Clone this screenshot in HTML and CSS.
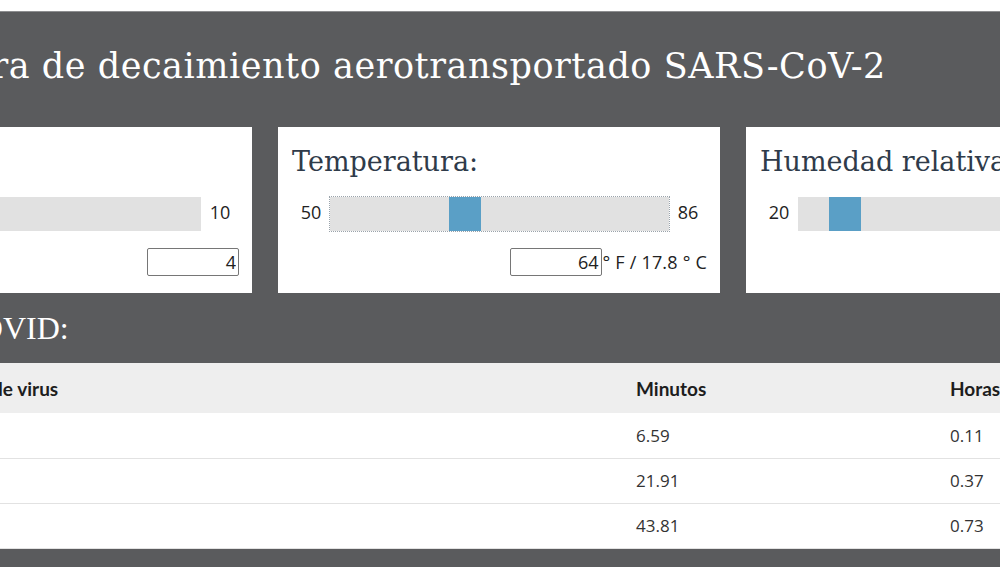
FILE: index.html
```html
<!DOCTYPE html>
<html lang="es">
<head>
    <meta charset="UTF-8">
    <title>Calculadora de decaimiento aerotransportado SARS-CoV-2</title>
    <link rel="stylesheet" href="styles.css">
</head>
<body>

    <div class="page">
        <div class="panel">

            <h1 class="title">Calculadora de decaimiento aerotransportado SARS-CoV-2</h1>

            <div class="inputs">
                <div class="card">
                    <h2 class="card-label">Índice UV:</h2>
                    <div class="slider-row">
                        <span class="range-end">1</span>
                        <div class="track"><span class="thumb" style="--pos: 0.333"></span></div>
                        <span class="range-end">10</span>
                    </div>
                    <div class="value-row">
                        <input class="value-box" type="text" value="4">
                    </div>
                </div>

                <div class="card">
                    <h2 class="card-label">Temperatura:</h2>
                    <div class="slider-row">
                        <span class="range-end">50</span>
                        <div class="track track-focus"><span class="thumb" style="--pos: 0.389"></span></div>
                        <span class="range-end">86</span>
                    </div>
                    <div class="value-row">
                        <input class="value-box" type="text" value="64">
                        <span class="unit">° F / 17.8 ° C</span>
                    </div>
                </div>

                <div class="card">
                    <h2 class="card-label">Humedad relativa:</h2>
                    <div class="slider-row">
                        <span class="range-end">20</span>
                        <div class="track"><span class="thumb" style="--pos: 0.1"></span></div>
                        <span class="range-end">70</span>
                    </div>
                    <div class="value-row">
                        <input class="value-box" type="text" value="25">
                        <span class="unit">%</span>
                    </div>
                </div>
            </div>

            <h2 class="section-title">Resultados COVID:</h2>

            <table class="results">
                <colgroup>
                    <col class="col-label">
                    <col class="col-min">
                    <col class="col-hour">
                </colgroup>
                <thead>
                    <tr>
                        <th>Decaimiento de virus</th>
                        <th>Minutos</th>
                        <th>Horas</th>
                    </tr>
                </thead>
                <tbody>
                    <tr><td>50%</td><td>6.59</td><td>0.11</td></tr>
                    <tr><td>90%</td><td>21.91</td><td>0.37</td></tr>
                    <tr><td>99%</td><td>43.81</td><td>0.73</td></tr>
                </tbody>
            </table>

        </div>
    </div>

</body>
</html>
```

FILE: styles.css
```css
* {
    margin: 0;
    padding: 0;
    box-sizing: border-box;
}
body {
    font: 18px "Open Sans", sans-serif;
    color: #333;
    background: #fff;
    overflow: hidden;
}

/***************************************************/

.page {
    width: 1430px;
    margin-left: -216px;
    padding-top: 11px;
}
.panel {
    background: #5a5b5d;
    border-top: 1px solid #8d8e90;
    padding: 0 26px 40px 26px;
}

.title {
    font: normal 35px/42px "DejaVu Serif", serif;
    letter-spacing: 0.55px;
    color: #fff;
    padding: 33px 0 40px 0;
}

/*********************/

.inputs {
    display: grid;
    grid-template-columns: repeat(3, 442px);
    gap: 26px;
}
.card {
    background: #fff;
    height: 166px;
    padding: 18px 13px 17px 14px;
}
.card-label {
    font: normal 27px/34px "DejaVu Serif", serif;
    color: #2f3b4a;
}
.slider-row {
    display: flex;
    align-items: center;
    margin-top: 18px;
    height: 34px;
}
.range-end {
    width: 38px;
    text-align: center;
    font-size: 18px;
    color: #222;
    margin-bottom: 4px;
}
.track {
    flex: 1;
    height: 34px;
    background: #e1e1e1;
    position: relative;
}
.track-focus {
    outline: 1px dotted #9aa3ab;
}
.thumb {
    position: absolute;
    top: 0;
    bottom: 0;
    width: 32px;
    left: calc(var(--pos) * (100% - 32px));
    background: #5a9fc6;
}
.value-row {
    display: flex;
    justify-content: flex-end;
    align-items: center;
    margin-top: 17px;
    height: 28px;
}
.value-box {
    width: 92px;
    height: 28px;
    border: 1px solid #767676;
    border-radius: 2px;
    padding: 0 2px;
    text-align: right;
    font: 18px "Open Sans", sans-serif;
    color: #222;
}
.unit {
    font-size: 18px;
    color: #222;
    padding-left: 1px;
    letter-spacing: 0.2px;
}

/*********************/

.section-title {
    font: normal 32px/70px "Liberation Serif", serif;
    color: #fff;
}

.results {
    width: 100%;
    border-collapse: collapse;
    table-layout: fixed;
    background: #fff;
}
.col-label { width: 814px; }
.col-min { width: 314px; }
.results th {
    background: #eeeeee;
    height: 50px;
    text-align: left;
    padding-left: 12px;
    font: bold 19px Lato, sans-serif;
    color: #1d1d1d;
}
.results th:first-child,
.results td:first-child {
    padding-left: 70px;
}
.results td {
    height: 45px;
    padding-left: 12px;
    border-bottom: 1px solid #e2e2e2;
    font-size: 17px;
    color: #333;
}
```
